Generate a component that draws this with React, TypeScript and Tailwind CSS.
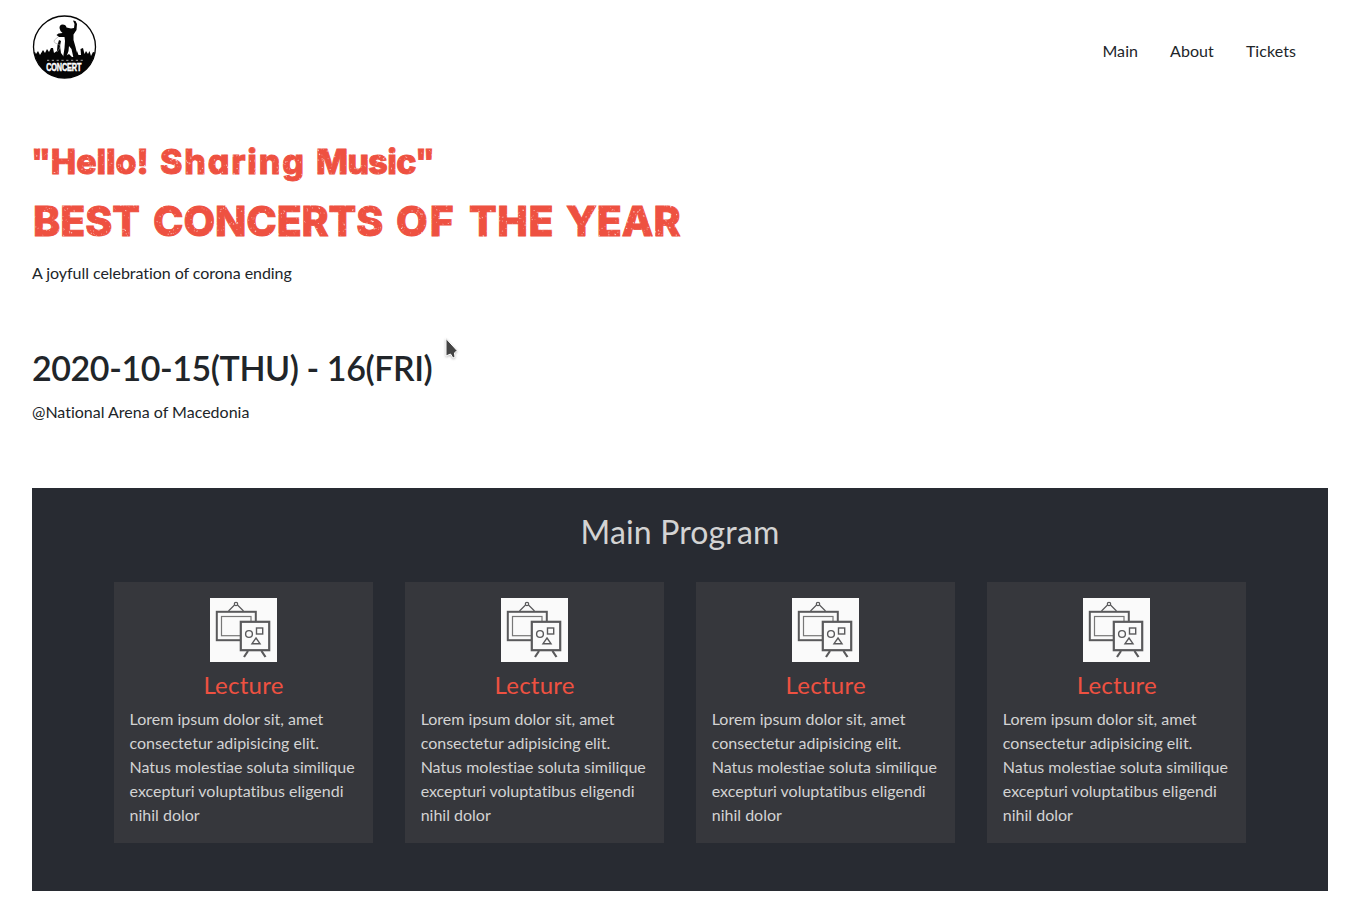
import React from "react";

const navItems = ["Main", "About", "Tickets"];
const programs = ["Lecture", "Lecture", "Lecture", "Lecture"];

function Logo() {
  return (
    <svg width="65" height="64" viewBox="0 0 65 64" aria-label="Concert">
      <defs>
        <clipPath id="logo-disc">
          <circle cx="32.5" cy="32" r="31" />
        </clipPath>
      </defs>
      <circle cx="32.5" cy="32" r="31" fill="#fff" />
      <g clipPath="url(#logo-disc)">
        <path
          d="M0 38 L3 37 L4 39 L6 36 L8 40 L11 35 L13 38 L15 34 L17 37 L19 33 L21 33 L22 38 L25 36 L25.5 30 L27 25 L29 26 L28 31 L29 38 L32 42 L37 39 L40 42 L43 42 L45 36 L46.5 40 L49 40 L48.5 34 L51 33 L52.5 39 L54 36 L56 39 L57.5 36 L59 41 L61 37 L65 38 V64 H0Z"
          fill="#050505"
        />
        <path
          d="M27.5 13 Q27.5 9.8 30.5 9.5 Q34 9.5 34.5 12.5 L39 13.5 L42 13 L42.5 9 L41 5.5 L43.5 6 L45 9 L44.5 15 L41.5 19.5 L41.5 25 L43.5 32 L45 38 L45.5 43 L41.5 43 L39.5 34 L37 31 L36.5 36 L34 43 L31 43 L32.5 33 L33 26 L32.5 22 L27 22 L24.5 20 L26.5 18.5 L30.5 18 L28.5 16 Z"
          fill="#050505"
        />
        <path d="M26 22 L22.5 25 Q21 28 26 29 T25 37" fill="none" stroke="#999" strokeWidth=".6" />
      </g>
      <circle cx="32.5" cy="32" r="31" fill="none" stroke="#050505" strokeWidth="1.3" />
      <path d="M15 45.4 H51" stroke="#888" strokeWidth="1.4" strokeDasharray="2.2 2.6" />
      <text
        transform="translate(14.2 55.8) scale(.7 1)"
        fontFamily="Liberation Sans, sans-serif"
        fontSize="10.4"
        letterSpacing="-.2"
        fontWeight="700"
        fill="#fff"
        stroke="#fff"
        strokeWidth=".5"
      >
        CONCERT
      </text>
    </svg>
  );
}

function EaselIcon() {
  return (
    <svg className="block" width="67" height="64" viewBox="0 0 67 64" fill="none" stroke="#59595b">
      <rect width="67" height="64" fill="#fafafa" stroke="none" />
      <rect x="6.8" y="13.8" width="39" height="28.4" strokeWidth="2" />
      <rect x="11.5" y="18.5" width="29.5" height="19.2" strokeWidth="1.2" stroke="#777" />
      <path d="M18.5 13 L24.5 7 M33.5 13 L27.5 7" strokeWidth="1.2" />
      <circle cx="26" cy="6" r="1.7" strokeWidth="1.2" />
      <rect x="30.8" y="23.8" width="28.4" height="28.4" fill="#fafafa" strokeWidth="2.2" />
      <circle cx="39" cy="36" r="3.4" strokeWidth="1.4" />
      <rect x="46.5" y="30" width="6.2" height="6" strokeWidth="1.4" />
      <path d="M46 40 L50 45.7 H42 Z" strokeWidth="1.4" />
      <path d="M38 53 L34 59 M51.5 53 L55.5 59" strokeWidth="2.2" />
    </svg>
  );
}

/** Deterministic flecks that give the headline its worn, printed look. */
function Flecks() {
  let seed = 7;
  const rnd = () => {
    seed = (seed * 16807) % 2147483647;
    return seed / 2147483647;
  };
  const flecks = Array.from({ length: 2600 }, () => ({
    x: rnd() * 652,
    y: rnd() * 100,
    a: rnd() * 180,
    w: 0.3 + rnd() * 0.8,
    h: 0.3 + rnd() * 0.4,
    o: 0.25 + rnd() * 0.5,
  }));
  return (
    <svg className="pointer-events-none absolute left-0 top-0" width="652" height="100" aria-hidden="true">
      {flecks.map((f, i) => (
        <ellipse
          key={i}
          cx={f.x}
          cy={f.y}
          rx={f.w}
          ry={f.h}
          opacity={f.o}
          fill="#fff"
          transform={`rotate(${f.a} ${f.x} ${f.y})`}
        />
      ))}
    </svg>
  );
}

export default function App() {
  return (
    <div className="h-[922px] overflow-hidden bg-white font-['Lato',sans-serif] text-base leading-6 text-[#212529] [font-variant-ligatures:none]">
      <div className="relative ml-8 w-[1296px]">
        <header className="flex h-[103px] items-start justify-between pt-[15px]">
          <Logo />
          <nav className="flex gap-8 pr-8 pt-6 tracking-[0.07px]">
            {navItems.map((n) => (
              <a key={n}>{n}</a>
            ))}
          </nav>
        </header>

        <section className="h-[385px]">
          <div className="relative h-[158px] pt-[34px] font-['Inter',sans-serif] font-extrabold text-[#ee5141] [font-feature-settings:'cv11'_1]">
            <h2 className="-ml-px flex h-[50px] items-center whitespace-nowrap text-[34px] leading-[50px] [-webkit-text-stroke:0.9px_#ee5141]">
              <span className="block w-[129px] tracking-[-0.1px]">"Hello!</span>
              <span className="block w-[156px] tracking-[1.8px]">Sharing</span>
              <span className="block tracking-[-0.65px]">Music"</span>
            </h2>
            <h1 className="flex h-[68px] items-center whitespace-nowrap pl-px text-[41px] leading-[68px] [-webkit-text-stroke:0.9px_#ee5141]">
              <span className="block w-[120px]">BEST</span>
              <span className="block w-[243px] tracking-[-0.1px]">CONCERTS</span>
              <span className="block w-[73px] tracking-[2px]">OF</span>
              <span className="block w-[97px] tracking-[0.5px]">THE</span>
              <span className="block">YEAR</span>
            </h1>
            <div className="absolute left-0 top-[40px]">
              <Flecks />
            </div>
          </div>
          <p className="tracking-[-0.05px]">A joyfull celebration of corona ending</p>
          <h3 className="mt-[62px] text-[34px] font-semibold leading-[42px] tracking-[-0.43px]">2020-10-15(THU) - 16(FRI)</h3>
          <p className="mt-[11px]">@National Arena of Macedonia</p>
        </section>

        <section className="h-[403px] bg-[#282b32] px-[82px] pt-[25px] text-[#d3d3d3]">
          <h2 className="text-center text-[32px] leading-[38px] tracking-[0.15px]">Main Program</h2>
          <div className="mt-[31px] flex gap-8">
            {programs.map((title, i) => (
              <article key={i} className="flex h-[261px] w-[259.1px] shrink-0 flex-col items-center bg-[#36373c] px-4 pt-4">
                <EaselIcon />
                <h3 className="mt-[8px] text-2xl leading-[29px] tracking-[0.25px] text-[#ee5141]">{title}</h3>
                <p className="mt-2 w-[228px]">
                  Lorem ipsum dolor sit, amet consectetur adipisicing elit. Natus molestiae soluta similique
                  excepturi voluptatibus eligendi nihil dolor
                </p>
              </article>
            ))}
          </div>
        </section>

        <svg
          className="absolute left-[411px] top-[335px] drop-shadow-[0_1px_1px_rgba(0,0,0,0.25)]"
          width="18"
          height="26"
          viewBox="0 0 18 26"
        >
          <path d="M3 3.5 V21 L7.5 19 L10 23 L12 22 L11.5 18 L14 15.5 Z" fill="#444" stroke="#fff" strokeWidth="1" />
        </svg>
      </div>
    </div>
  );
}
